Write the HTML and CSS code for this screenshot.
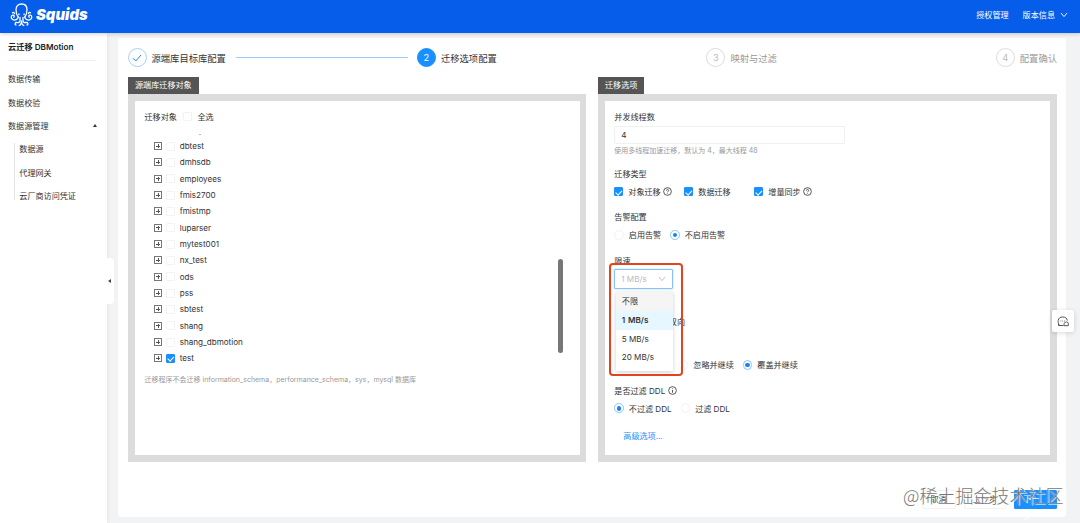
FILE: index.html
```html
<!DOCTYPE html>
<html lang="zh-CN">
<head>
    <meta charset="UTF-8">
    <meta name="viewport" content="width=device-width, initial-scale=1.0">
    <title>Squids DBMotion</title>
    <link rel="stylesheet" href="styles.css">
</head>
<body>
    <header class="header">
        <svg class="logo" viewBox="0 0 23 24" fill="none" stroke="#fff" stroke-width="1.3" stroke-linecap="round">
            <path d="M8.200 14C6.600 12 6 9.500 6 6.800C6 3 8.300 1 11.500 1S17 3 17 6.800C17 9.500 16.400 12 14.800 14"/>
            <path d="M8.200 14c-.2 2.600-3.500 3.800-5.600 2.500-2-1.300-1.700-4 .2-4.300 1.300-.1 1.900 1.200 1 2M2.500 9.800c.8-.8 2.200-.2 2 .9"/>
            <path d="M14.800 14c.2 2.600 3.500 3.800 5.600 2.500 2-1.300 1.700-4-.2-4.300-1.300-.1-1.900 1.200-1 2M20.500 9.800c-.8-.8-2.200-.2-2 .9"/>
            <path d="M10 14.500v3c0 2.100-1.600 2.400-3.200 2-1.700-.3-2.400 1.900-.8 2.600"/>
            <path d="M13 14.500v3c0 2.100 1.600 2.400 3.200 2 1.700-.3 2.400 1.900.8 2.600"/>
            <path d="M11.500 18c0 2.500-.8 3.900-2.300 4.500M11.500 18c0 2.500.8 3.900 2.300 4.500"/>
            <path d="M8.900 11v.7M14.100 11v.7"/>
        </svg>
        <span class="brand">Squids</span>
        <nav class="header-nav">
            <span>授权管理</span>
            <span>版本信息</span>
            <svg class="chevron" viewBox="0 0 8 6"><path d="M1 1l3 3.600L7 1"/></svg>
        </nav>
    </header>

    <div class="layout">
        <aside class="sidebar">
            <div class="side-title">云迁移 DBMotion</div>
            <div class="side-item">数据传输</div>
            <div class="side-item">数据校验</div>
            <div class="side-item">数据源管理<i class="caret-up"></i></div>
            <div class="side-sub">
                <div class="side-item">数据源</div>
                <div class="side-item">代理网关</div>
                <div class="side-item">云厂商访问凭证</div>
            </div>
            <div class="side-handle"></div>
        </aside>

        <main class="card">
            <div class="steps">
                <div class="step done">
                    <span class="step-icon"><svg viewBox="0 0 10 8"><path d="M1 4.200L3.800 7 9 1"/></svg></span>
                    <span>源端库目标库配置</span>
                    <i class="step-line"></i>
                </div>
                <div class="step active"><span class="step-icon">2</span><span>迁移选项配置</span></div>
                <div class="step"><span class="step-icon">3</span><span>映射与过滤</span></div>
                <div class="step last"><span class="step-icon">4</span><span>配置确认</span></div>
            </div>

            <div class="panels">
                <section class="panel">
                    <div class="panel-tag">源端库迁移对象</div>
                    <div class="panel-body objects">
                        <div class="tree-head">
                            <span>迁移对象</span><i class="check"></i><span>全选</span>
                        </div>
                        <div class="tree-wrap">
                            <div class="tree">
                                <div class="node"><i class="expand"></i><i class="check"></i><span>candy</span></div>
                                <div class="node"><i class="expand"></i><i class="check"></i><span>dbtest</span></div>
                                <div class="node"><i class="expand"></i><i class="check"></i><span>dmhsdb</span></div>
                                <div class="node"><i class="expand"></i><i class="check"></i><span>employees</span></div>
                                <div class="node"><i class="expand"></i><i class="check"></i><span>fmis2700</span></div>
                                <div class="node"><i class="expand"></i><i class="check"></i><span>fmistmp</span></div>
                                <div class="node"><i class="expand"></i><i class="check"></i><span>luparser</span></div>
                                <div class="node"><i class="expand"></i><i class="check"></i><span>mytest001</span></div>
                                <div class="node"><i class="expand"></i><i class="check"></i><span>nx_test</span></div>
                                <div class="node"><i class="expand"></i><i class="check"></i><span>ods</span></div>
                                <div class="node"><i class="expand"></i><i class="check"></i><span>pss</span></div>
                                <div class="node"><i class="expand"></i><i class="check"></i><span>sbtest</span></div>
                                <div class="node"><i class="expand"></i><i class="check"></i><span>shang</span></div>
                                <div class="node"><i class="expand"></i><i class="check"></i><span>shang_dbmotion</span></div>
                                <div class="node"><i class="expand"></i><i class="check on"></i><span>test</span></div>
                            </div>
                            <div class="scrollbar"></div>
                        </div>
                        <div class="hint tree-hint">迁移程序不会迁移 information_schema，performance_schema，sys，mysql 数据库</div>
                    </div>
                </section>

                <section class="panel">
                    <div class="panel-tag">迁移选项</div>
                    <div class="panel-body form">
                        <div class="item threads">
                            <div class="label">并发线程数</div>
                            <div class="input">4</div>
                            <div class="hint">使用多线程加速迁移，默认为 4，最大线程 48</div>
                        </div>
                        <div class="item">
                            <div class="label">迁移类型</div>
                            <div class="control types">
                                <div class="option"><i class="check on"></i><span>对象迁移</span><svg class="info" viewBox="0 0 10 10"><circle cx="5" cy="5" r="4.300"/><path d="M3.700 4c0-1.800 2.600-1.700 2.600-.1 0 1-1.300 1-1.300 2M5 7v.7"/></svg></div>
                                <div class="option"><i class="check on"></i><span>数据迁移</span></div>
                                <div class="option"><i class="check on"></i><span>增量同步</span><svg class="info" viewBox="0 0 10 10"><circle cx="5" cy="5" r="4.300"/><path d="M3.700 4c0-1.800 2.600-1.700 2.600-.1 0 1-1.300 1-1.300 2M5 7v.7"/></svg></div>
                            </div>
                        </div>
                        <div class="item">
                            <div class="label">告警配置</div>
                            <div class="control">
                                <div class="option"><i class="radio"></i><span>启用告警</span></div>
                                <div class="option"><i class="radio on"></i><span>不启用告警</span></div>
                            </div>
                        </div>
                        <div class="item">
                            <div class="label">限速</div>
                            <div class="select">
                                <span>1 MB/s</span>
                                <svg class="chevron" viewBox="0 0 8 6"><path d="M1 1l3 3.600L7 1"/></svg>
                                <div class="dropdown">
                                    <div class="dropdown-item hover">不限</div>
                                    <div class="dropdown-item selected">1 MB/s</div>
                                    <div class="dropdown-item">5 MB/s</div>
                                    <div class="dropdown-item">20 MB/s</div>
                                </div>
                                <div class="highlight"></div>
                            </div>
                        </div>
                        <div class="item">
                            <div class="label"></div>
                            <div class="control direction">双向</div>
                        </div>
                        <div class="item">
                            <div class="label"></div>
                            <div class="control conflict">
                                <div class="option"><i class="radio"></i><span>忽略并继续</span></div>
                                <div class="option"><i class="radio on"></i><span>覆盖并继续</span></div>
                            </div>
                        </div>
                        <div class="item">
                            <div class="label">是否过滤 DDL <svg class="info" viewBox="0 0 10 10"><circle cx="5" cy="5" r="4.300"/><path d="M5 4.400v3.100M5 2.600v.7"/></svg></div>
                            <div class="control">
                                <div class="option"><i class="radio on"></i><span>不过滤 DDL</span></div>
                                <div class="option"><i class="radio"></i><span>过滤 DDL</span></div>
                            </div>
                        </div>
                        <div class="more">高级选项...</div>
                    </div>
                </section>
            </div>

            <div class="actions">
                <div class="btn">取消</div>
                <div class="btn">上一步</div>
                <div class="btn primary">下一步</div>
            </div>
        </main>
    </div>

    <div class="chat">
        <svg viewBox="0 0 12 11"><path d="M2.300 8.500C1.200 7.500 1 6 1.200 4.500 1.500 2 3.200 1 5.700 1s4.400 1.200 4.600 3.500M1.500 7.500v2h5M7 9.700h4.300V7.300C11.300 5.500 8 5.500 7.300 7.200c-.4 1-.3 1.700-.3 2.500M3.500 5h.7M5.400 5h.7M7.300 5H8"/></svg>
    </div>
    <div class="watermark">@稀土掘金技术社区</div>
</body>
</html>
```
FILE: styles.css
```css
* {
    box-sizing: border-box;
}
body {
    margin: 0;
    height: 523px;
    overflow: hidden;
    display: flex;
    flex-direction: column;
    position: relative;
    font-family: Inter, "Noto Sans CJK SC", sans-serif;
    font-size: 8.1px;
    color: #333;
    background: #f2f3f5;
}
.header {
    height: 32.5px;
    flex: none;
    display: flex;
    align-items: center;
    padding: 0 12px 3px 9.500px;
    background: #055de9;
    color: #fff;
    box-shadow: 0 1px 4px rgba(0, 20, 80, 0.2);
    z-index: 2;
}
.logo {
    width: 23px;
    height: 24px;
}
.brand {
    margin-left: 3.500px;
    font-family: Inter, sans-serif;
    font-size: 14.800px;
    font-weight: 900;
    font-style: italic;
}
.header-nav {
    margin-left: auto;
    display: flex;
    align-items: center;
    gap: 14px;
}
.chevron {
    width: 8px;
    height: 6px;
    fill: none;
    stroke: currentColor;
    stroke-width: 0.9;
}
.header-nav .chevron {
    margin-left: -9px;
}
.layout {
    flex: 1;
    min-height: 0;
    display: flex;
}
.sidebar {
    position: relative;
    width: 107px;
    flex: none;
    padding: 0 11px 0 8px;
    background: #fff;
    box-shadow: 1px 0 3px rgba(0, 0, 0, 0.06);
}
.side-title {
    height: 28.500px;
    line-height: 29px;
    margin-bottom: 6px;
    font-weight: 600;
    font-size: 8.200px;
    color: #222;
    border-bottom: 1px solid #eee;
}
.side-item {
    display: flex;
    align-items: center;
    justify-content: space-between;
    height: 23.4px;
    white-space: nowrap;
}
.side-sub {
    position: relative;
    padding-left: 11.300px;
}
.side-sub::before {
    content: '';
    position: absolute;
    left: 6px;
    top: 6px;
    bottom: 7px;
    width: 1px;
    background: #e4e4e4;
}
.caret-up {
    margin-right: -1px;
    border: 2.500px solid transparent;
    border-top: 0;
    border-bottom: 3px solid #333;
}
.side-handle {
    position: absolute;
    left: 107px;
    top: 225px;
    width: 7px;
    height: 46px;
    background: #fff;
    border-radius: 0 4px 4px 0;
}
.side-handle::after {
    content: '';
    position: absolute;
    left: 1px;
    top: 21px;
    border: 2px solid transparent;
    border-left: 0;
    border-right: 3px solid #444;
}
.card {
    flex: 1;
    min-width: 0;
    margin: 5.500px 14px 6px 11px;
    padding: 9.500px 9px 0 10px;
    background: #fff;
    border-radius: 3px;
}
.steps {
    display: flex;
    height: 20px;
    margin: 0 0 9px -0.5px;
    font-size: 9.300px;
}
.step {
    width: 289.500px;
    display: flex;
    align-items: center;
    gap: 5px;
    color: #999;
    white-space: nowrap;
}
.step.last {
    width: auto;
}
.step.done,
.step.active {
    color: #333;
}
.step-icon {
    width: 19px;
    height: 19px;
    display: flex;
    align-items: center;
    justify-content: center;
    border: 1px solid #ddd;
    border-radius: 50%;
    color: #bbb;
}
.step-icon svg {
    width: 10px;
    height: 8px;
    fill: none;
    stroke: #1890ff;
}
.step.done .step-icon {
    border-color: #a9cff8;
}
.step.active .step-icon {
    background: #1890ff;
    border-color: #1890ff;
    color: #fff;
}
.step-line {
    flex: 1;
    height: 1px;
    margin: 0 9px 0 5px;
    background: #9ccbf9;
}
.panels {
    display: grid;
    grid-template-columns: 458px 459px;
    gap: 12px;
}
.panel {
    display: flex;
    flex-direction: column;
    align-items: flex-start;
}
.panel-tag {
    height: 17.500px;
    line-height: 17px;
    padding: 0 7px;
    background: #555;
    color: #fff;
}
.panel-body {
    width: 100%;
    height: 368px;
    padding: 6.500px 9.500px;
    border: 7px solid #dcdcdc;
    background: #fff;
}
.panel-body.objects {
    border-right-width: 6px;
}
.panel-body.form {
    padding-left: 9.300px;
}
.tree-head {
    display: flex;
    align-items: center;
    height: 18px;
}
.tree-head .check {
    margin: 0 5px 0 6.500px;
}
/* the list is scrolled down, the first row only peeks out */
.tree-wrap {
    display: flex;
    justify-content: space-between;
    height: 238px;
    margin-top: 8.500px;
    overflow: hidden;
}
.tree {
    margin: -12.500px 0 0 9.700px;
}
.node {
    display: flex;
    align-items: center;
    height: 16.35px;
}
.node span {
    margin-left: 5px;
}
.expand {
    position: relative;
    width: 8px;
    height: 8px;
    margin-right: 3.500px;
    border: 1px solid #777;
}
.expand::before,
.expand::after {
    content: '';
    position: absolute;
    background: #555;
}
.expand::before {
    left: 1px;
    top: 2.500px;
    width: 4px;
    height: 1px;
}
.expand::after {
    left: 2.500px;
    top: 1px;
    width: 1px;
    height: 4px;
}
.check {
    flex: none;
    position: relative;
    width: 9px;
    height: 9px;
    border: 1px solid #f3f3f3;
    border-radius: 1px;
}
.check.on {
    background: #1890ff;
    border-color: #1890ff;
}
.check.on::after {
    content: '';
    position: absolute;
    left: 2px;
    top: 0.5px;
    width: 2.600px;
    height: 4.500px;
    border: solid #fff;
    border-width: 0 1.200px 1.200px 0;
    transform: rotate(43deg);
}
.scrollbar {
    width: 5px;
    height: 94px;
    margin: 125px 7.500px 0 0;
    border-radius: 3px;
    background: #777;
}
.hint {
    font-size: 7px;
    color: #999;
    white-space: nowrap;
}
.tree-hint {
    height: 16px;
    line-height: 16px;
}
.item {
    height: 43.35px;
}
.item.threads {
    height: 57px;
}
.label {
    display: flex;
    align-items: center;
    gap: 3px;
    height: 18px;
}
.input {
    width: 231px;
    height: 18px;
    line-height: 17px;
    padding: 0 6px;
    border: 1px solid #f0f0f0;
    border-radius: 1px;
}
.input + .hint {
    line-height: 13px;
}
.control {
    display: flex;
    align-items: center;
    gap: 9px;
    height: 18px;
}
.option {
    display: flex;
    align-items: center;
    white-space: nowrap;
}
.types {
    gap: 0;
}
.types .option {
    width: 70px;
}
.option .check,
.option .radio {
    margin-right: 5px;
}
.info {
    width: 9px;
    height: 9px;
    fill: none;
    stroke: #333;
    stroke-width: 0.9;
}
.option .info {
    margin-left: 2px;
}
.radio {
    width: 9.500px;
    height: 9.500px;
    display: flex;
    align-items: center;
    justify-content: center;
    border: 1px solid #f3f3f3;
    border-radius: 50%;
}
.radio.on {
    border-color: #8cc5fb;
}
.radio.on::after {
    content: '';
    width: 4.600px;
    height: 4.600px;
    border-radius: 50%;
    background: #1683f0;
}
.select {
    position: relative;
    display: flex;
    align-items: center;
    justify-content: space-between;
    width: 59px;
    height: 20px;
    padding: 0 6px;
    border: 1px solid #8cc2fa;
    border-radius: 1px;
    box-shadow: 0 0 0 1px rgba(24, 144, 255, 0.12);
    color: #bbb;
}
.dropdown {
    position: absolute;
    z-index: 3;
    left: 0.5px;
    top: 22px;
    width: 57px;
    height: 79px;
    background: #fff;
    box-shadow: 0 1px 4px rgba(0, 0, 0, 0.2);
    color: #333;
}
.dropdown-item {
    height: 18.700px;
    line-height: 18.700px;
    padding-left: 6px;
}
.dropdown-item.hover {
    background: #f5f5f5;
}
.dropdown-item.selected {
    background: #e6f7ff;
    font-weight: 600;
    word-spacing: 0.8px;
}
/* red frame round the speed limit menu */
.highlight {
    position: absolute;
    z-index: 4;
    left: -6px;
    top: -7px;
    width: 73.500px;
    height: 113px;
    border: 2px solid #e5421f;
    border-radius: 4px;
}
.direction {
    padding-left: 54.500px;
}
.conflict {
    padding-left: 64.500px;
}
.more {
    margin-top: 5.500px;
    padding-left: 9px;
    color: #1890ff;
}
.actions {
    display: flex;
    justify-content: flex-end;
    gap: 8px;
    margin-top: 28px;
}
.btn {
    height: 19px;
    line-height: 17px;
    padding: 0 8px;
    border: 1px solid #f3f3f3;
    border-radius: 1px;
}
.btn.primary {
    width: 43px;
    padding: 0 8.500px;
    background: #1890ff;
    border-color: #1890ff;
    color: #fff;
}
.chat {
    position: absolute;
    z-index: 3;
    left: 1052px;
    top: 310px;
    width: 22px;
    height: 22px;
    display: flex;
    align-items: center;
    justify-content: center;
    background: #fff;
    border-radius: 2px;
    box-shadow: 0 1px 5px rgba(0, 0, 0, 0.15);
}
.chat svg {
    width: 12px;
    height: 11px;
    fill: none;
    stroke: #444;
    stroke-width: 0.9;
}
.watermark {
    position: absolute;
    z-index: 5;
    left: 903px;
    top: 482px;
    font-family: "Noto Sans CJK SC", sans-serif;
    font-size: 18px;
    font-weight: 300;
    line-height: 26px;
    color: #777;
    text-shadow: 0 0 1px #fff, 1px 1px 0 rgba(255, 255, 255, 0.7);
    white-space: nowrap;
}
```
